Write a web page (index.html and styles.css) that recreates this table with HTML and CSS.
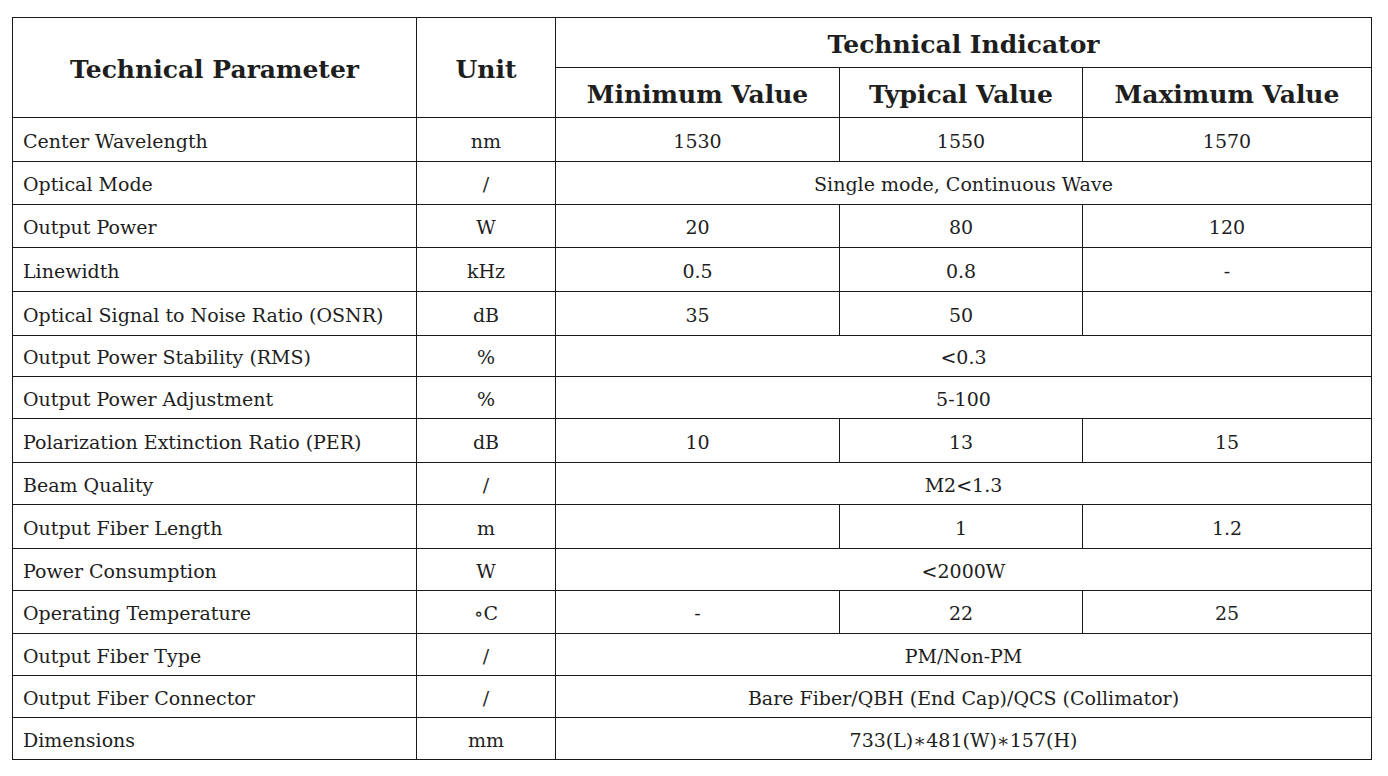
FILE: index.html
```html
<!DOCTYPE html>
<html>
<head>
<meta charset="utf-8">
<link rel="stylesheet" href="styles.css">
</head>
<body>
<table class="spec">
  <colgroup>
    <col class="c-param"><col class="c-unit"><col class="c-min"><col class="c-typ"><col class="c-max">
  </colgroup>
  <thead>
    <tr class="h1">
      <th rowspan="2">Technical Parameter</th>
      <th rowspan="2">Unit</th>
      <th colspan="3">Technical Indicator</th>
    </tr>
    <tr class="h2">
      <th>Minimum Value</th>
      <th>Typical Value</th>
      <th>Maximum Value</th>
    </tr>
  </thead>
  <tbody>
    <tr class="r44"><td class="p">Center Wavelength</td><td>nm</td><td>1530</td><td>1550</td><td>1570</td></tr>
    <tr class="r43"><td class="p">Optical Mode</td><td>/</td><td colspan="3">Single mode, Continuous Wave</td></tr>
    <tr class="r43"><td class="p">Output Power</td><td>W</td><td>20</td><td>80</td><td>120</td></tr>
    <tr class="r44"><td class="p">Linewidth</td><td>kHz</td><td>0.5</td><td>0.8</td><td>-</td></tr>
    <tr class="r44"><td class="p">Optical Signal to Noise Ratio (OSNR)</td><td>dB</td><td>35</td><td>50</td><td></td></tr>
    <tr class="r41"><td class="p">Output Power Stability (RMS)</td><td>%</td><td colspan="3">&lt;0.3</td></tr>
    <tr class="r42"><td class="p">Output Power Adjustment</td><td>%</td><td colspan="3">5-100</td></tr>
    <tr class="r44"><td class="p">Polarization Extinction Ratio (PER)</td><td>dB</td><td>10</td><td>13</td><td>15</td></tr>
    <tr class="r42"><td class="p">Beam Quality</td><td>/</td><td colspan="3">M2&lt;1.3</td></tr>
    <tr class="r44"><td class="p">Output Fiber Length</td><td>m</td><td></td><td>1</td><td>1.2</td></tr>
    <tr class="r42"><td class="p">Power Consumption</td><td>W</td><td colspan="3">&lt;2000W</td></tr>
    <tr class="r43"><td class="p">Operating Temperature</td><td>∘C</td><td>-</td><td>22</td><td>25</td></tr>
    <tr class="r42"><td class="p">Output Fiber Type</td><td>/</td><td colspan="3">PM/Non-PM</td></tr>
    <tr class="r42"><td class="p">Output Fiber Connector</td><td>/</td><td colspan="3">Bare Fiber/QBH (End Cap)/QCS (Collimator)</td></tr>
    <tr class="r42"><td class="p">Dimensions</td><td>mm</td><td colspan="3">733(L)∗481(W)∗157(H)</td></tr>
  </tbody>
</table>
</body>
</html>
```
FILE: styles.css
```css
html, body {
  margin: 0;
  padding: 0;
  background: #ffffff;
}
body {
  padding: 17px 0 0 12px;
  font-family: "DejaVu Serif", "Liberation Serif", serif;
  color: #1e1e1e;
}
.spec {
  border-collapse: collapse;
  table-layout: fixed;
  width: 1359px;
}
.c-param { width: 404px; }
.c-unit { width: 139px; }
.c-min { width: 284px; }
.c-typ { width: 243px; }
.c-max { width: 289px; }
.spec th, .spec td {
  border: 1px solid #1a1a1a;
  padding: 0;
  text-align: center;
  vertical-align: middle;
  white-space: nowrap;
  overflow: hidden;
}
.spec th {
  font-weight: bold;
  font-size: 25px;
  padding-top: 3px;
}
.h1 th, .h2 th { height: 46px; }
.spec td {
  font-size: 19px;
  padding-top: 2px;
}
.spec td.p {
  text-align: left;
  padding-left: 10px;
}
.r41 td { height: 38px; }
.r42 td { height: 39px; }
.r43 td { height: 40px; }
.r44 td { height: 41px; }
```
